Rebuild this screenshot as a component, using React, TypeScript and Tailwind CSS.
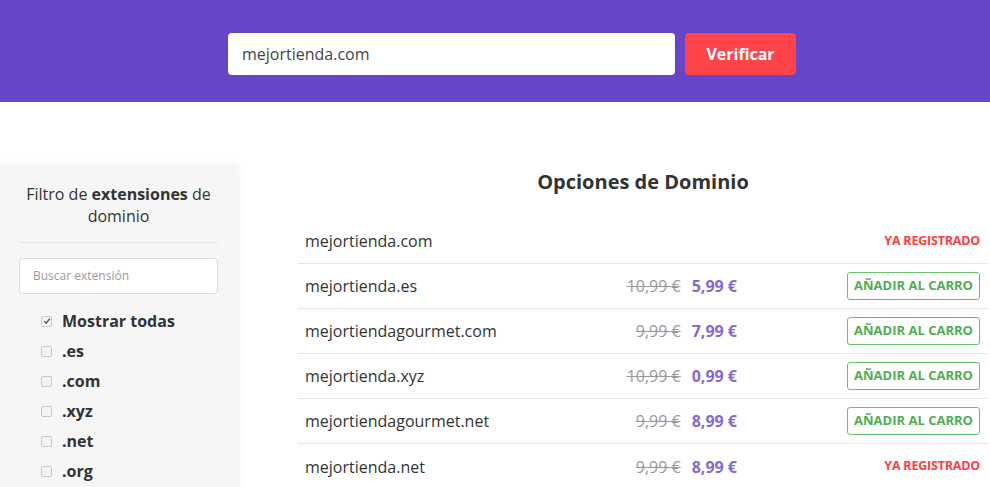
import React from 'react';

const extensions = ['.es', '.com', '.xyz', '.net', '.org'];

const domains = [
  { name: 'mejortienda.com', old: '', price: '', taken: true },
  { name: 'mejortienda.es', old: '10,99 €', price: '5,99 €', taken: false },
  { name: 'mejortiendagourmet.com', old: '9,99 €', price: '7,99 €', taken: false },
  { name: 'mejortienda.xyz', old: '10,99 €', price: '0,99 €', taken: false },
  { name: 'mejortiendagourmet.net', old: '9,99 €', price: '8,99 €', taken: false },
  { name: 'mejortienda.net', old: '9,99 €', price: '8,99 €', taken: true },
];

const CheckBox = ({ checked }: { checked?: boolean }) => (
  <span className="w-[11px] h-[11px] rounded-[2px] border border-[#c8c8c8] bg-[#f3f3f3] flex items-center justify-center shrink-0">
    {checked && (
      <svg width="8" height="8" viewBox="0 0 8 8">
        <path d="M1.2 4.2 L3.2 6.1 L6.8 1.6" stroke="#555" strokeWidth="1.4" fill="none" />
      </svg>
    )}
  </span>
);

const App = () => {
  return (
    <div className="w-[990px] h-[487px] overflow-hidden bg-white text-[#333]" style={{ fontFamily: '"Open Sans", "Noto Sans", sans-serif' }}>
      {/* search bar */}
      <header className="h-[102px] bg-[#6646c6] flex items-center justify-center gap-[10px] pt-[6px] pl-[34px]">
        <div className="w-[447px] h-[42px] bg-white rounded-[4px] flex items-center px-[14px] text-[16px] text-[#444]">
          mejortienda.com
        </div>
        <button className="w-[111px] h-[42px] bg-[#ff4549] rounded-[4px] text-white font-bold text-[16px]">
          Verificar
        </button>
      </header>

      <div className="flex pt-[63px]">
        {/* filter sidebar */}
        <aside className="w-[237px] h-[330px] bg-[#f6f6f6] shadow-[2px_0_8px_rgba(0,0,0,0.06)] px-[19px] pt-[18px] shrink-0">
          <h3 className="text-center text-[16px] leading-[22px] text-[#333] pb-[15px] border-b border-[#e4e4e4]">
            <span>Filtro de </span>
            <span className="font-bold">extensiones</span>
            <span> de dominio</span>
          </h3>
          <div className="mt-[15px] h-[36px] bg-white border border-[#dcdcdc] rounded-[4px] flex items-center px-[13px] text-[12px] text-[#999]">
            Buscar extensión
          </div>
          <ul className="mt-[12px] pl-[22px] flex flex-col">
            <li className="h-[30px] flex items-center gap-[10px] font-bold text-[16px] text-[#333]">
              <CheckBox checked />
              Mostrar todas
            </li>
            {extensions.map((e) => (
              <li key={e} className="h-[30px] flex items-center gap-[10px] font-bold text-[16px] text-[#333]">
                <CheckBox />
                {e}
              </li>
            ))}
          </ul>
        </aside>

        {/* domain options */}
        <main className="ml-[61px] w-[690px]">
          <h2 className="text-center font-bold text-[20px] leading-[28px] text-[#333] pt-[3px]">Opciones de Dominio</h2>
          <div className="mt-[23px]">
            {domains.map((d, i) => (
              <div
                key={d.name}
                className={`h-[45px] flex items-center pl-[7px] pr-[8px] ${i < domains.length - 1 ? 'border-b border-[#e6e6e6]' : ''}`}
              >
                <span className="flex-1 text-[16px] text-[#333]">{d.name}</span>
                <span className="w-[200px] flex justify-end items-center gap-[11px] pr-[3px]">
                  {d.old && <span className="line-through text-[16px] text-[#999]">{d.old}</span>}
                  {d.price && <span className="font-bold text-[16px] text-[#8468d6]">{d.price}</span>}
                </span>
                <span className="w-[240px] flex justify-end">
                  {d.taken ? (
                    <span className="text-[12.5px] tracking-[-0.2px] font-bold text-[#ff3b3f]">YA REGISTRADO</span>
                  ) : (
                    <button className="h-[28px] w-[133px] border border-[#66c266] rounded-[3px] text-[13px] font-bold text-[#4fae4f]">
                      AÑADIR AL CARRO
                    </button>
                  )}
                </span>
              </div>
            ))}
          </div>
        </main>
      </div>
    </div>
  );
};

export default App;
